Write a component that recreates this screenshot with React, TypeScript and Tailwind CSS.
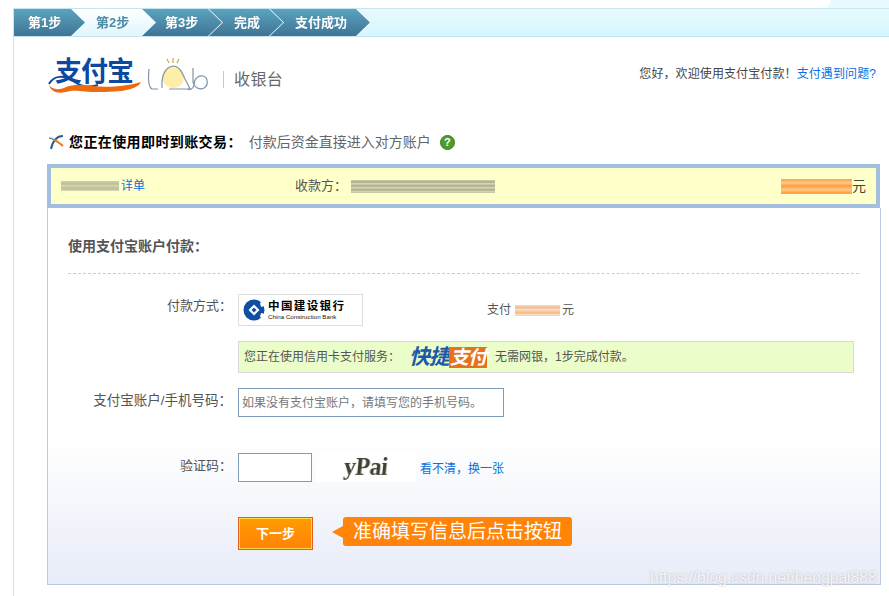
const steps = [
  { label: "第1步", wrap: "z-50", cls: "w-[71px] pl-[14px] text-white bg-[linear-gradient(180deg,#5aa3bf,#3f7495)]" },
  { label: "第2步", wrap: "z-40 -ml-[14px]", cls: "w-[84px] pl-[25px] text-[#4d8ba6] bg-[linear-gradient(180deg,#ffffff,#dff6fc)]" },
  { label: "第3步", wrap: "z-30 -ml-[15px]", cls: "w-[82px] pl-[25px] text-white bg-[linear-gradient(180deg,#5aa3bf,#3f7495)]" },
  { label: "完成", wrap: "z-20 -ml-[13px]", cls: "w-[74px] pl-[25px] text-white bg-[linear-gradient(180deg,#5aa3bf,#3f7495)]" },
  { label: "支付成功", wrap: "z-10 -ml-[13px]", cls: "w-[100px] pl-[25px] text-white bg-[linear-gradient(180deg,#5aa3bf,#3f7495)]" },
]

function Logo() {
  return (
    <div className="relative w-[162px] h-[40px]">
      <span className="absolute left-[7px] top-[0px] text-[27px] leading-[34px] font-bold text-[#0d4a9f] tracking-[-1px] whitespace-nowrap">支付宝</span>
      <svg className="absolute left-0 top-0" width="162" height="40" viewBox="0 0 162 40">
        <path d="M1 29C6 20 16 20 25 26C34 32 40 33 50 30" fill="none" stroke="#0d4a9f" strokeWidth="2" />
        <path d="M1 30C4 34 10 36 18 32C26 29 34 30 44 31C60 33 80 31 93 27C90 33 80 37 52 37C34 37 26 34 18 37C10 39 3 37 1 30Z" fill="#ec6a10" />
        <path d="M101 14C100 24 100 32 104 34H110" fill="none" stroke="#7e93a8" strokeWidth="1.2" />
        <circle cx="125" cy="22" r="11" fill="#fdeeaa" />
        <path d="M114 33C113 20 118 12 125 11C131 11 134 17 137 24C139 28 141 31 142 34H121" fill="none" stroke="#8096ab" strokeWidth="1.2" />
        <path d="M125 3V8M119 4L121 8M131 4L129 8" stroke="#c9a94a" strokeWidth="1.2" />
        <path d="M145 13V27C146 33 152 35 156 33C161 30 160 22 155 21C150 20 146 24 146 30C145 35 141 35 140 34" fill="none" stroke="#7e93a8" strokeWidth="1.2" />
      </svg>
    </div>
  )
}

function Smear({ className }: { className: string }) {
  return <div className={`shrink-0 ${className}`} />
}

function CcbMark() {
  return (
    <svg width="22" height="22" viewBox="0 0 22 22">
      <circle cx="11" cy="11" r="10.5" fill="#0f4ea3" />
      <path d="M11 5.5L16.5 11L11 16.5L5.5 11Z" fill="#fff" />
      <path d="M17 4L22 1V7L18 8Z" fill="#fff" />
      <path d="M17 18L22 21V15L18 14Z" fill="#fff" />
      <path d="M11 8.5L13.5 11L11 13.5L8.5 11Z" fill="#0f4ea3" />
    </svg>
  )
}

function App() {
  return (
    <div className="relative w-[889px] h-[596px] overflow-hidden bg-white text-[12px] text-[#555] [font-family:'Liberation_Sans','Noto_Sans_CJK_SC',sans-serif]">
      <div className="pl-[13px] h-full flex flex-col">
        {/* step bar */}
        <div className="flex h-[8px] shrink-0">
          <div className="flex-1" />
          <div className="w-[62px] bg-[#e8fafd] [clip-path:polygon(4px_0,100%_0,100%_100%,0_100%)]" />
        </div>
        <div className="flex h-[29px] shrink-0 border-y border-[#c6e6ef] border-l bg-[linear-gradient(180deg,#e8fafd,#d5f6ff)]">
          {steps.map((s) => (
            <div key={s.label} className={`relative shrink-0 ${s.wrap} [filter:drop-shadow(1px_0_0_#fff)]`}>
              <div className={`h-[27px] flex items-center font-bold text-[13px] [clip-path:polygon(0_0,calc(100%-14px)_0,100%_50%,calc(100%-14px)_100%,0_100%)] ${s.cls}`}>
                {s.label}
              </div>
            </div>
          ))}
        </div>

        <div className="flex-1 border-l border-[#c9e6ef]">
          {/* logo row */}
          <div className="flex items-start mt-[18px] pl-[34px] pr-[13px] h-[40px]">
            <Logo />
            <div className="w-px h-[17px] bg-[#c8c8c8] ml-[13px] mt-[16px]" />
            <span className="ml-[10px] mt-[13px] text-[16px] leading-[24px] tracking-[0.4px] text-[#666]">收银台</span>
            <div className="ml-auto mt-[10px] text-[12px] leading-[18px] flex tracking-[0.1px]">
              <span className="text-[#444]">您好，欢迎使用支付宝付款！</span>
              <a className="text-[#0a6fe0]">支付遇到问题?</a>
            </div>
          </div>

          {/* notice */}
          <div className="flex items-center mt-[38px] pl-[34px] h-[18px]">
            <svg width="16" height="16" viewBox="0 0 16 16" fill="none">
              <path d="M15 2C9 2 5 6 3 15" stroke="#2b5c94" strokeWidth="2" />
              <path d="M6 6C9 7 12 9 15 12" stroke="#e97b27" strokeWidth="2" />
              <path d="M1 4C3 4 5 5 6 6" stroke="#6d8aa8" strokeWidth="1.5" />
            </svg>
            <span className="ml-[5px] text-[14px] font-bold text-black tracking-[0.4px]">您正在使用即时到账交易：</span>
            <span className="ml-[7px] text-[14px] text-[#666]">付款后资金直接进入对方账户</span>
            <span className="ml-[9px] w-[15px] h-[15px] rounded-full bg-[#4f9a2a] border border-[#3b8020] text-white text-[11px] font-bold leading-[13px] text-center">?</span>
          </div>

          {/* order summary */}
          <div className="flex items-center mt-[13px] ml-[33px] w-[833px] h-[44px] border-4 border-[#a3bfe0] bg-[#ffffca]">
            <Smear className="ml-[10px] w-[58px] h-[10px] blur-[0.5px] bg-[repeating-linear-gradient(180deg,#cfcfa8_0px,#bdbd9a_3px,#dedcb8_5px)]" />
            <a className="ml-[2px] text-[#0a6fe0]">详单</a>
            <span className="ml-[150px] text-[13px] text-[#555] whitespace-nowrap">收款方：</span>
            <Smear className="ml-[4px] w-[144px] h-[13px] blur-[0.5px] bg-[repeating-linear-gradient(180deg,#d3d2ae_0px,#a9a88c_2px,#e3e2bd_4px)]" />
            <Smear className="ml-auto w-[71px] h-[15px] blur-[0.5px] bg-[repeating-linear-gradient(180deg,#ffa040_0px,#ffc98a_4px,#ff9a3a_7px)]" />
            <span className="mr-[10px] text-[14px] text-[#444]">元</span>
          </div>

          {/* payment form */}
          <div className="ml-[33px] w-[834px] h-[377px] border-x border-b border-[#bcc9e3] bg-[linear-gradient(180deg,#fff_0,#fff_232px,#e8ecf8_100%)]">
            <h2 className="ml-[20px] text-[14px] leading-[18px] font-bold text-[#555] pt-[29px]">使用支付宝账户付款：</h2>
            <div className="mt-[18px] ml-[20px] mr-[21px] border-t border-dashed border-[#ccc]" />

            <div className="flex mt-[20px]">
              <label className="w-[184px] text-right text-[13px] leading-[24px]">付款方式：</label>
              <div className="ml-[6px] w-[125px] h-[32px] border border-[#ddd] bg-white flex items-center pl-[4px]">
                <CcbMark />
                <div className="ml-[3px] flex flex-col">
                  <span className="text-[11.5px] leading-[13px] font-bold text-black tracking-[1.4px] whitespace-nowrap">中国建设银行</span>
                  <span className="text-[6.2px] leading-[8px] text-[#222] whitespace-nowrap">China Construction Bank</span>
                </div>
              </div>
              <div className="ml-[124px] h-[32px] flex items-center">
                <span>支付</span>
                <Smear className="ml-[4px] w-[45px] h-[11px] blur-[0.5px] bg-[repeating-linear-gradient(180deg,#f7d9bd_0px,#f4b888_3px,#fbeadb_5px)]" />
                <span className="ml-[2px]">元</span>
              </div>
            </div>

            <div className="ml-[190px] mt-[15px] w-[616px] h-[32px] border border-[#d6dadb] bg-[#ebfdc9] flex items-center pl-[5px] whitespace-nowrap">
              <span>您正在使用信用卡支付服务：</span>
              <span className="ml-[9px] text-[21px] leading-[22px] font-bold italic text-[#1a5aa8] tracking-[-1px]">快捷</span>
              <span className="text-[19px] leading-[21px] font-bold italic text-white bg-[#e8711c] px-[1px] tracking-[-1px]">支付</span>
              <span className="ml-[8px]">无需网银，1步完成付款。</span>
            </div>

            <div className="flex mt-[15px]">
              <label className="w-[184px] text-right text-[13.5px] leading-[26px] whitespace-nowrap">支付宝账户/手机号码：</label>
              <div className="ml-[6px] w-[266px] h-[29px] border border-[#7f9db9] bg-white flex items-center pl-[3px] text-[12px] text-[#777]">如果没有支付宝账户，请填写您的手机号码。</div>
            </div>

            <div className="flex mt-[35px] items-center h-[30px]">
              <label className="w-[184px] text-right text-[13px] -mt-[3px]">验证码：</label>
              <div className="ml-[6px] w-[74px] h-[29px] border border-[#7f9db9] bg-white" />
              <div className="ml-[4px] w-[100px] h-[30px] bg-white flex items-center justify-center">
                <span className="inline-block [font-family:'Liberation_Serif',serif] text-[24px] leading-[28px] font-bold text-[#3f4030] tracking-[-0.5px] -skew-x-6 blur-[0.5px]">yPai</span>
              </div>
              <a className="ml-[4px] mt-[4px] text-[#0a6fe0]">看不清，换一张</a>
            </div>

            <div className="flex mt-[35px] ml-[190px] items-start">
              <button className="w-[75px] h-[33px] border border-[#e2601a] bg-[linear-gradient(180deg,#ff9c00,#ff8207)] text-white font-bold text-[13px] shadow-[inset_0_0_0_1px_#ffd54a]">下一步</button>
              <div className="ml-[30px] relative h-[29px] w-[229px] rounded-[3px] bg-[#ff8408] text-white text-[19px] leading-[29px] pl-[10px] whitespace-nowrap">
                <span className="absolute left-[-11px] top-[9px] w-0 h-0 border-y-[6px] border-y-transparent border-r-[11px] border-r-[#ff8408]" />
                准确填写信息后点击按钮
              </div>
            </div>
          </div>
        </div>
      </div>

      {/* watermark */}
      <span className="absolute left-[650px] top-[568px] text-[15.7px] leading-[20px] text-white/80 [text-shadow:0_0_2px_#b0b0b0] whitespace-nowrap">https://blog.csdn.net/hengpai888</span>
    </div>
  )
}

export default App
